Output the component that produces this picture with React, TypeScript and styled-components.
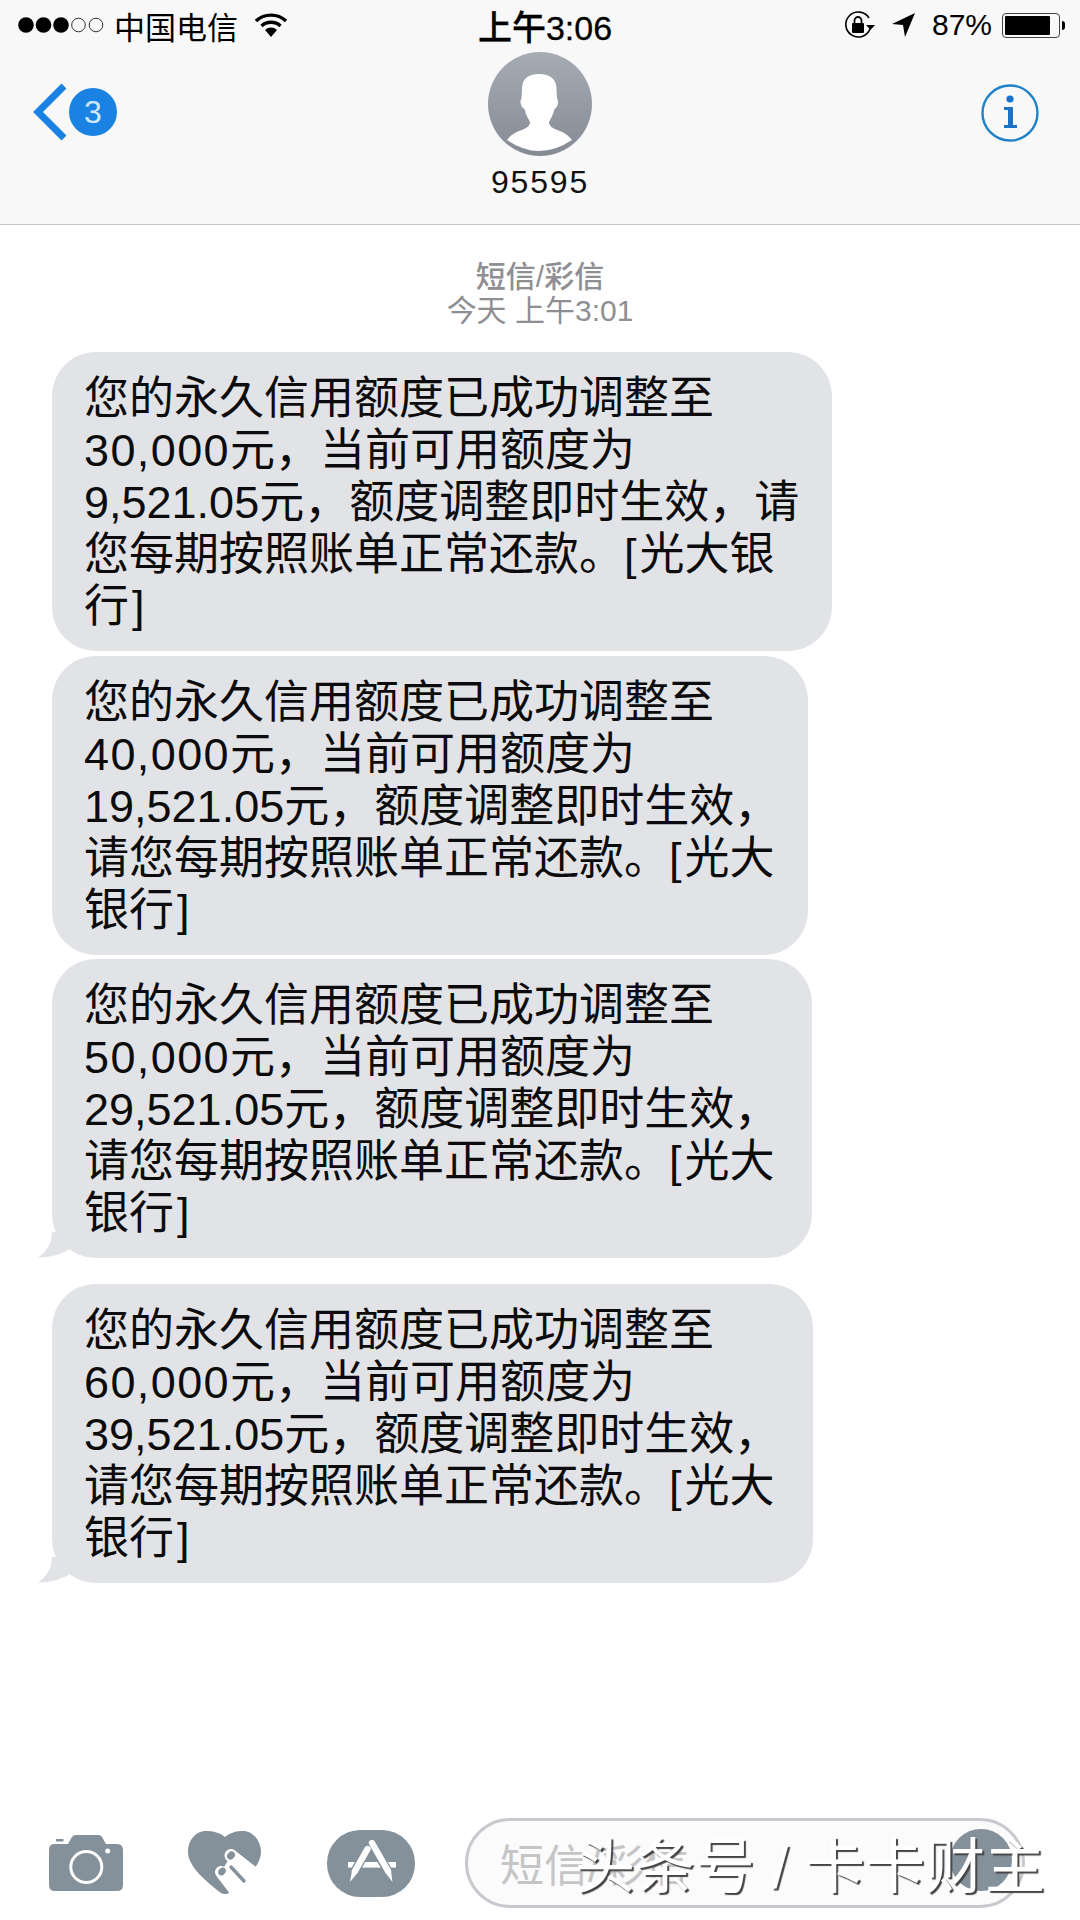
import styled, { createGlobalStyle } from 'styled-components';
import { Fragment } from 'react';

const BANK_MESSAGES = [
  {
    width: 780,
    tail: false,
    gap: 5,
    lines: ['您的永久信用额度已成功调整至', '30,000元，当前可用额度为', '9,521.05元，额度调整即时生效，请', '您每期按照账单正常还款。[光大银', '行]'],
  },
  {
    width: 756,
    tail: false,
    gap: 4,
    lines: ['您的永久信用额度已成功调整至', '40,000元，当前可用额度为', '19,521.05元，额度调整即时生效，', '请您每期按照账单正常还款。[光大', '银行]'],
  },
  {
    width: 760,
    tail: true,
    gap: 26,
    lines: ['您的永久信用额度已成功调整至', '50,000元，当前可用额度为', '29,521.05元，额度调整即时生效，', '请您每期按照账单正常还款。[光大', '银行]'],
  },
  {
    width: 761,
    tail: true,
    gap: 0,
    lines: ['您的永久信用额度已成功调整至', '60,000元，当前可用额度为', '39,521.05元，额度调整即时生效，', '请您每期按照账单正常还款。[光大', '银行]'],
  },
];

const SignalDots = () => (
  <svg width="88" height="20" viewBox="0 0 88 20">
    <circle cx="9" cy="10" r="7.8" fill="#000" />
    <circle cx="26.5" cy="10" r="7.8" fill="#000" />
    <circle cx="44" cy="10" r="7.8" fill="#000" />
    <circle cx="61.5" cy="10" r="6.8" fill="none" stroke="#333" strokeWidth="1" />
    <circle cx="79" cy="10" r="6.8" fill="none" stroke="#333" strokeWidth="1" />
  </svg>
);

const WifiIcon = () => (
  <svg width="32" height="24" viewBox="0 0 32 24">
    <path d="M1 8 A22 22 0 0 1 31 8" fill="none" stroke="#000" strokeWidth="3.4" />
    <path d="M6.5 13 A14 14 0 0 1 25.5 13" fill="none" stroke="#000" strokeWidth="3.4" />
    <path d="M10 17 A8.5 8.5 0 0 1 22 17 L16 24 Z" fill="#000" />
  </svg>
);

const RotationLockIcon = () => (
  <svg width="32" height="30" viewBox="0 0 32 30">
    <path d="M26 19 A12.5 12.5 0 1 1 25 8" fill="none" stroke="#000" strokeWidth="1.6" />
    <path d="M22 15 H31 L26.5 20 Z" fill="#000" />
    <rect x="8" y="13" width="12" height="10" rx="1" fill="#000" />
    <path d="M10.5 13 V10.5 A3.5 3.5 0 0 1 17.5 10.5 V13" fill="none" stroke="#000" strokeWidth="1.8" />
  </svg>
);

const LocationIcon = () => (
  <svg width="24" height="26" viewBox="0 0 24 26">
    <path d="M23 1 L13 25 L11 13 L0 12 Z" fill="#000" />
  </svg>
);

const Battery = () => (
  <BatteryBody>
    <BatteryLevel $percent={87} />
  </BatteryBody>
);

const PersonIcon = () => (
  <svg width="104" height="104" viewBox="0 0 104 104">
    <defs>
      <linearGradient id="avatarBg" x1="0" y1="0" x2="0" y2="1">
        <stop offset="0" stopColor="#a6acb4" />
        <stop offset="1" stopColor="#858b95" />
      </linearGradient>
    </defs>
    <circle cx="52" cy="52" r="52" fill="url(#avatarBg)" />
    <path
      d="M51 22 C39 22 33.5 28 34 38 L33.5 46 L32.5 49 C32.5 54 34.5 56 36.5 57 C37.5 62 40 66 42 70 C42 74 39 76 31 79 C26 81 22 84 19 88 Q51 110 84 88 C81 84 77 81 72 79 C64 76 61 74 61 70 C63 66 65.5 62 66.5 57 C68.5 56 70 54 70 49 L69 46 L68.5 38 C69 28 63 22 51 22 Z"
      fill="#fff"
    />
  </svg>
);

const InfoIcon = () => (
  <svg width="60" height="60" viewBox="0 0 60 60">
    <circle cx="30" cy="30" r="27.5" fill="none" stroke="#1f82c9" strokeWidth="2.4" />
    <circle cx="30" cy="16" r="3.6" fill="#1b73c8" />
    <path d="M24 24 H33 V42 H37 V45 H24 V42 H28 V27 H24 Z" fill="#1b73c8" />
  </svg>
);

const Chevron = () => (
  <svg width="34" height="58" viewBox="0 0 34 58">
    <path d="M31 3 L5 29 L31 55" fill="none" stroke="#1a82e2" strokeWidth="7" />
  </svg>
);

const BubbleTail = () => (
  <TailShape width="34" height="26" viewBox="0 0 34 26">
    <path d="M14 0 C14 12 8 20 0 25.5 C12 26 24 22 34 16 V0 Z" fill="#e2e3e7" />
  </TailShape>
);

const CameraIcon = () => (
  <svg width="74" height="56" viewBox="0 0 74 56">
    <path
      d="M5 9 H19 L23 2 Q24 0 27 0 H49 Q52 0 53 2 L57 9 H68 Q74 9 74 15 V50 Q74 56 68 56 H6 Q0 56 0 50 V15 Q0 9 5 9 Z"
      fill="#84909a"
    />
    <rect x="7" y="4" width="7.5" height="2.5" fill="#84909a" />
    <circle cx="37.3" cy="32" r="15.5" fill="none" stroke="#fff" strokeWidth="3" />
    <circle cx="58.7" cy="16" r="2.5" fill="#fff" />
  </svg>
);

const HeartIcon = () => (
  <svg width="74" height="64" viewBox="0 0 74 64">
    <path
      d="M37 6 C31 1 24 0 18 0 C7 0 0 10 0 21 C0 36 20 52 33 62 Q37 64 41 62 C54 52 73 36 73 21 C73 10 65 0 55 0 C49 0 43 1 37 6 Z"
      fill="#84909a"
    />
    <path d="M43 24.5 L78 52 L80 70 L55 70 L33 41 Z" fill="#fff" />
    <path d="M43 24.5 L78 52" stroke="#fff" strokeWidth="13" strokeLinecap="round" />
    <path d="M33 41 L55 70" stroke="#fff" strokeWidth="12" strokeLinecap="round" />
    <path d="M43 36 L56 50" stroke="#84909a" strokeWidth="3.4" strokeLinecap="round" />
    <ellipse cx="43" cy="24.5" rx="3.6" ry="4.4" fill="#84909a" transform="rotate(40 43 24.5)" />
    <ellipse cx="34" cy="40.5" rx="3.4" ry="4.2" fill="#84909a" transform="rotate(40 34 40.5)" />
  </svg>
);

const AppStoreIcon = () => (
  <svg width="88" height="67" viewBox="0 0 88 67">
    <rect width="88" height="67" rx="33" fill="#84909a" />
    <rect x="21" y="32" width="48" height="5.6" fill="#fff" />
    <path d="M41 18 L28 41" stroke="#84909a" strokeWidth="9" />
    <path d="M44 12 L62 43" stroke="#84909a" strokeWidth="9" />
    <path d="M40.5 19 L28 41" stroke="#fff" strokeWidth="6.4" strokeLinecap="round" />
    <path d="M25.2 39.6 L30.8 42.4 L23 52 Z" fill="#fff" />
    <path d="M45 13 L61 41" stroke="#fff" strokeWidth="6.4" strokeLinecap="round" />
    <path d="M58.2 42.4 L63.8 39.6 L65.5 52 Z" fill="#fff" />
  </svg>
);

// amounts and brackets are set a bit wider in the original than in Liberation Sans
const BubbleText = ({ line }: { line: string }) => (
  <BubbleLine>
    {line.split(/(\d0,000|\[|\])/).map((part, i) => {
      if (part === '[' || part === ']') {
        return (
          <Bracket key={i} $open={part === '['}>
            {part}
          </Bracket>
        );
      }
      return i % 2 === 1 ? <Amount key={i}>{part}</Amount> : part;
    })}
  </BubbleLine>
);

const App = () => {
  return (
    <Fragment>
      <GlobalStyle />
      <Page>
        <Header>
          <StatusBar>
            <StatusLeft>
              <SignalDots />
              <Carrier>中国电信</Carrier>
              <WifiIcon />
            </StatusLeft>
            <Clock>上午3:06</Clock>
            <StatusRight>
              <RotationLockIcon />
              <LocationIcon />
              <BatteryText>87%</BatteryText>
              <Battery />
            </StatusRight>
          </StatusBar>
          <NavBar>
            <BackButton>
              <Chevron />
              <UnreadBadge>3</UnreadBadge>
            </BackButton>
            <Contact>
              <PersonIcon />
              <ContactName>95595</ContactName>
            </Contact>
            <InfoButton>
              <InfoIcon />
            </InfoButton>
          </NavBar>
        </Header>

        <Timestamp>
          <TimestampKind>短信/彩信</TimestampKind>
          <span>今天 上午3:01</span>
        </Timestamp>

        <Thread>
          {BANK_MESSAGES.map(msg => (
            <Bubble key={msg.lines[1]} $width={msg.width} $gap={msg.gap}>
              {msg.lines.map(line => (
                <BubbleText key={line} line={line} />
              ))}
              {msg.tail && <BubbleTail />}
            </Bubble>
          ))}
        </Thread>

        <Composer>
          <ComposerIcons>
            <CameraIcon />
            <HeartIcon />
            <AppStoreIcon />
          </ComposerIcons>
          <ComposerInput>
            <Placeholder>短信/彩信</Placeholder>
            <SendButton />
          </ComposerInput>
          <Watermark>头条号 / 卡卡财主</Watermark>
        </Composer>
      </Page>
    </Fragment>
  );
};

export default App;

const GlobalStyle = createGlobalStyle`
  body {
    margin: 0;
    background: #fff;
  }
`;
const Page = styled.div`
  width: 1080px;
  height: 1920px;
  display: flex;
  flex-direction: column;
  overflow: hidden;
  background: #fff;
  color: #000;
  font-family: 'Liberation Sans', 'Noto Sans CJK SC', sans-serif;
`;
const Header = styled.header`
  height: 224px;
  flex: none;
  background: #f8f8f8;
  border-bottom: 1px solid #c4c4c6;
`;
const StatusBar = styled.div`
  height: 50px;
  padding: 0 20px 0 17px;
  display: grid;
  grid-template-columns: 1fr auto 1fr;
  align-items: center;
`;
const StatusLeft = styled.div`
  display: flex;
  align-items: center;
  gap: 9px;
  svg:last-child {
    margin-left: 8px;
  }
`;
const Carrier = styled.span`
  font-size: 31px;
`;
const Clock = styled.span`
  margin-left: 13px;
  font-size: 34px;
  font-weight: 500;
  -webkit-text-stroke: 0.3px #000;
`;
const StatusRight = styled.div`
  display: flex;
  align-items: center;
  justify-content: flex-end;
  gap: 16px;
`;
const BatteryText = styled.span`
  font-size: 30px;
`;
const BatteryBody = styled.div`
  position: relative;
  width: 58px;
  height: 25px;
  margin-left: -6px;
  padding: 2px;
  box-sizing: border-box;
  border: 1px solid #444;
  border-radius: 4px;
  &::after {
    content: '';
    position: absolute;
    right: -6px;
    top: 7px;
    width: 3px;
    height: 9px;
    background: #000;
    border-radius: 0 3px 3px 0;
  }
`;
const BatteryLevel = styled.div<{ $percent: number }>`
  width: ${props => props.$percent}%;
  height: 100%;
  background: #000;
  border-radius: 1px;
`;
const NavBar = styled.div`
  display: grid;
  grid-template-columns: 1fr auto 1fr;
  align-items: start;
  padding: 2px 40px 0;
`;
const BackButton = styled.div`
  display: flex;
  align-items: center;
  margin: 31px 0 0 -7px;
  svg {
    margin-right: 2px;
  }
`;
const UnreadBadge = styled.div`
  width: 48px;
  height: 48px;
  border-radius: 50%;
  background: #1a82e2;
  color: #cdeafc;
  font-size: 32px;
  display: flex;
  align-items: center;
  justify-content: center;
`;
const Contact = styled.div`
  display: flex;
  flex-direction: column;
  align-items: center;
  gap: 8px;
  svg {
    display: block;
  }
`;
const ContactName = styled.span`
  font-size: 32px;
  line-height: 36px;
  letter-spacing: 1.8px;
  color: #111;
`;
const InfoButton = styled.div`
  display: flex;
  justify-content: flex-end;
  margin-top: 31px;
`;
const Timestamp = styled.div`
  display: flex;
  flex-direction: column;
  align-items: center;
  padding-top: 35px;
  font-size: 30px;
  line-height: 34px;
  color: #8e8e93;
`;
const TimestampKind = styled.span`
  font-weight: 500;
`;
const Thread = styled.div`
  display: flex;
  flex-direction: column;
  align-items: flex-start;
  padding: 24px 0 0 52px;
`;
const Bubble = styled.div<{ $width: number; $gap: number }>`
  position: relative;
  width: ${props => props.$width}px;
  margin-bottom: ${props => props.$gap}px;
  padding: 21px 0 18px 32px;
  box-sizing: border-box;
  background: #e2e3e7;
  border-radius: 44px;
`;
const BubbleLine = styled.div`
  font-size: 45px;
  line-height: 52px;
  white-space: nowrap;
  color: #0c0c0c;
`;
const Amount = styled.span`
  letter-spacing: 1.4px;
`;
const Bracket = styled.span<{ $open: boolean }>`
  padding: ${props => (props.$open ? '0 3px 0 0' : '0 0 0 3px')};
`;
const TailShape = styled.svg`
  position: absolute;
  left: -14px;
  bottom: 0;
`;
const Composer = styled.footer`
  position: relative;
  margin-top: auto;
  padding: 0 55px 12px 49px;
  display: flex;
  align-items: center;
  justify-content: space-between;
`;
const ComposerIcons = styled.div`
  display: flex;
  align-items: center;
  gap: 65px;
`;
const ComposerInput = styled.div`
  width: 560px;
  height: 90px;
  box-sizing: border-box;
  padding: 0 10px 0 32px;
  border: 3px solid #c8c9ce;
  border-radius: 45px;
  background: #fbfbfb;
  display: flex;
  align-items: center;
  justify-content: space-between;
`;
const Placeholder = styled.span`
  font-size: 44px;
  color: #c5c5c8;
`;
const SendButton = styled.div`
  width: 62px;
  height: 62px;
  margin-top: -6px;
  border-radius: 50%;
  background: #84909a;
`;
const Watermark = styled.div`
  position: absolute;
  left: 575px;
  top: 17px;
  font-size: 60px;
  line-height: 66px;
  white-space: nowrap;
  color: #fff;
  text-shadow: 2px 2px 1px #444;
`;
